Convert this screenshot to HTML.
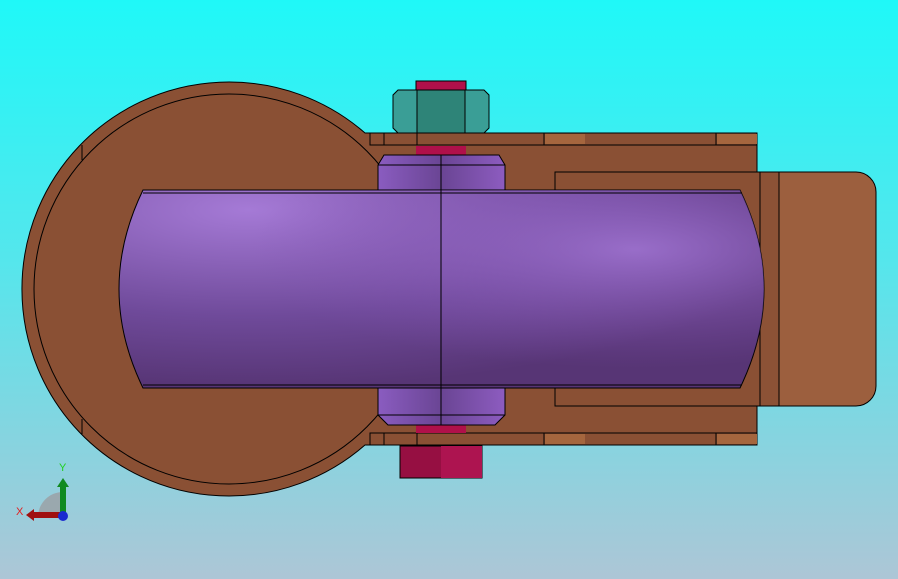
<!DOCTYPE html><html><head><style>html,body{margin:0;padding:0;width:898px;height:579px;overflow:hidden}</style></head><body>
<svg width="898" height="579" viewBox="0 0 898 579" xmlns="http://www.w3.org/2000/svg" style="display:block">
<defs>
<linearGradient id="bg" x1="0" y1="0" x2="0" y2="1"><stop offset="0" stop-color="#1ff8f8"/><stop offset="0.45" stop-color="#55e6ec"/><stop offset="1" stop-color="#adc6d6"/></linearGradient>
<radialGradient id="pu" cx="0.2" cy="0.1" r="0.9"><stop offset="0" stop-color="#a57ad6"/><stop offset="0.6" stop-color="#6f4a9a"/><stop offset="1" stop-color="#573575"/></radialGradient>
<radialGradient id="pu2" cx="0.8" cy="0.3" r="0.6"><stop offset="0" stop-color="#9e72cf" stop-opacity="0.9"/><stop offset="1" stop-color="#8050b0" stop-opacity="0"/></radialGradient>
<linearGradient id="pn" x1="0" x2="1"><stop offset="0" stop-color="#8a5cc0"/><stop offset="0.5" stop-color="#6a4594"/><stop offset="1" stop-color="#8d5cc0"/></linearGradient>
</defs>
<rect width="898" height="579" fill="url(#bg)"/>
<!-- big ring -->
<path d="M365,133 L757,133 L757,445 L365,445 A207,207 0 1 1 365,133 Z" fill="#8a5034" stroke="#000" stroke-width="1"/>
<circle cx="229" cy="289" r="195" fill="none" stroke="#000"/>
<line x1="82" y1="145" x2="82" y2="160" stroke="#000"/><line x1="82" y1="419" x2="82" y2="434" stroke="#000"/>
<!-- flanges -->
<rect x="370" y="133" width="387" height="12" fill="#8a5034" stroke="#000"/>
<rect x="370" y="433" width="387" height="12" fill="#8a5034" stroke="#000"/>
<rect x="545" y="134" width="40" height="10" fill="#a5663e"/><rect x="717" y="134" width="40" height="10" fill="#a5663e"/>
<rect x="545" y="434" width="40" height="10" fill="#a5663e"/><rect x="717" y="434" width="40" height="10" fill="#a5663e"/>
<g stroke="#000"><line x1="384" y1="133" x2="384" y2="145"/><line x1="417" y1="133" x2="417" y2="145"/><line x1="544" y1="133" x2="544" y2="145"/><line x1="716" y1="133" x2="716" y2="145"/>
<line x1="384" y1="433" x2="384" y2="445"/><line x1="417" y1="433" x2="417" y2="445"/><line x1="544" y1="433" x2="544" y2="445"/><line x1="716" y1="433" x2="716" y2="445"/></g>
<rect x="555" y="172" width="205" height="234" fill="#8a5034" stroke="#000"/>
<!-- tab -->
<path d="M760,172 L856,172 A20,20 0 0 1 876,192 L876,386 A20,20 0 0 1 856,406 L760,406 Z" fill="#9c5f3e" stroke="#000"/>
<rect x="760" y="172" width="19" height="234" fill="#8c5236" stroke="#000"/>
<!-- bolt -->
<rect x="416" y="81" width="50" height="9" fill="#b0104a" stroke="#000"/>
<rect x="416" y="146" width="50" height="9" fill="#b0104a"/>
<rect x="416" y="425" width="50" height="8" fill="#b0104a"/>
<!-- teal nut -->
<path d="M398,90 L484,90 L489,95 L489,128 L484,133 L398,133 L393,128 L393,95 Z" fill="#3a9e96" stroke="#000"/>
<rect x="417" y="90" width="48" height="43" fill="#2e8478" stroke="#000"/>
<!-- red nut -->
<rect x="400" y="446" width="82" height="32" fill="#960f42" stroke="#000"/>
<rect x="441" y="446" width="41" height="32" fill="#ad1450"/>
<!-- purple nut parts -->
<path d="M384,155 L499,155 L505,165 L505,190 L378,190 L378,165 Z" fill="url(#pn)" stroke="#000"/>
<line x1="378" y1="165" x2="505" y2="165" stroke="#000"/>
<path d="M378,388 L505,388 L505,415 L495,425 L388,425 L378,415 Z" fill="url(#pn)" stroke="#000"/>
<line x1="378" y1="415" x2="505" y2="415" stroke="#000"/>
<!-- cylinder -->
<path d="M143,190 L740,190 Q788,289 740,388 L143,388 Q95,289 143,190 Z" fill="url(#pu)" stroke="#000"/>
<path d="M143,190 L740,190 Q788,289 740,388 L143,388 Q95,289 143,190 Z" fill="url(#pu2)"/>
<line x1="143" y1="193" x2="742" y2="193" stroke="#000"/>
<line x1="143" y1="385" x2="742" y2="385" stroke="#000"/>
<line x1="441" y1="155" x2="441" y2="425" stroke="#000"/>
<!-- axis triad -->
<path d="M63,517 L38,517 A25,25 0 0 1 63,492 Z" fill="#9aa8ae"/>
<rect x="60" y="485" width="6" height="32" fill="#108a20"/><path d="M57,487 L63,478 L69,487 Z" fill="#108a20"/>
<rect x="33" y="512" width="30" height="6" fill="#a01010"/><path d="M34,509 L26,515 L34,521 Z" fill="#a01010"/>
<circle cx="63" cy="516" r="5" fill="#1a2ad0"/>
<text x="59" y="471" font-family="Liberation Sans,sans-serif" font-size="11" fill="#20d020">Y</text>
<text x="16" y="515" font-family="Liberation Sans,sans-serif" font-size="11" fill="#e02020">X</text>
</svg>
</body></html>
